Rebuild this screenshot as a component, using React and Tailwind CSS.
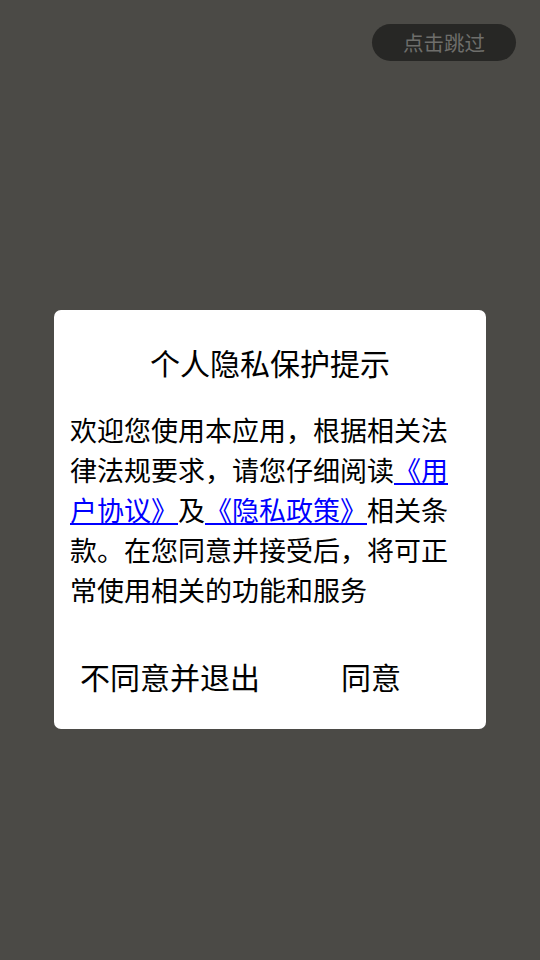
export default function App() {
  const font = { fontFamily: '"Noto Sans CJK SC", "Noto Sans", sans-serif' };
  return (
    <div className="w-[540px] h-[960px] bg-[#4b4a46] flex flex-col" style={font}>
      <div className="flex justify-end pt-[24px] pr-[24px]">
        <div className="w-[144px] h-[37px] rounded-full bg-[#272725] flex items-center justify-center text-[20.5px] leading-none text-[#6e6e6b]">
          点击跳过
        </div>
      </div>
      <div className="mt-[249px] mx-[54px] bg-white rounded-[7px] h-[419px] flex flex-col">
        <div className="pt-[32px] text-center text-[30px] leading-[40px] text-black">个人隐私保护提示</div>
        <div className="mt-[28px] px-[16px] text-[27px] leading-[40px] text-black">
          欢迎您使用本应用，根据相关法律法规要求，请您仔细阅读
          <span className="text-[#0000ff] underline">《用户协议》</span>及
          <span className="text-[#0000ff] underline">《隐私政策》</span>相关条款。在您同意并接受后，将可正常使用相关的功能和服务
        </div>
        <div className="mt-[36px] flex items-center h-[60px] text-[30px] text-black">
          <div className="pl-[26px]">不同意并退出</div>
          <div className="ml-[81px]">同意</div>
        </div>
      </div>
    </div>
  );
}
